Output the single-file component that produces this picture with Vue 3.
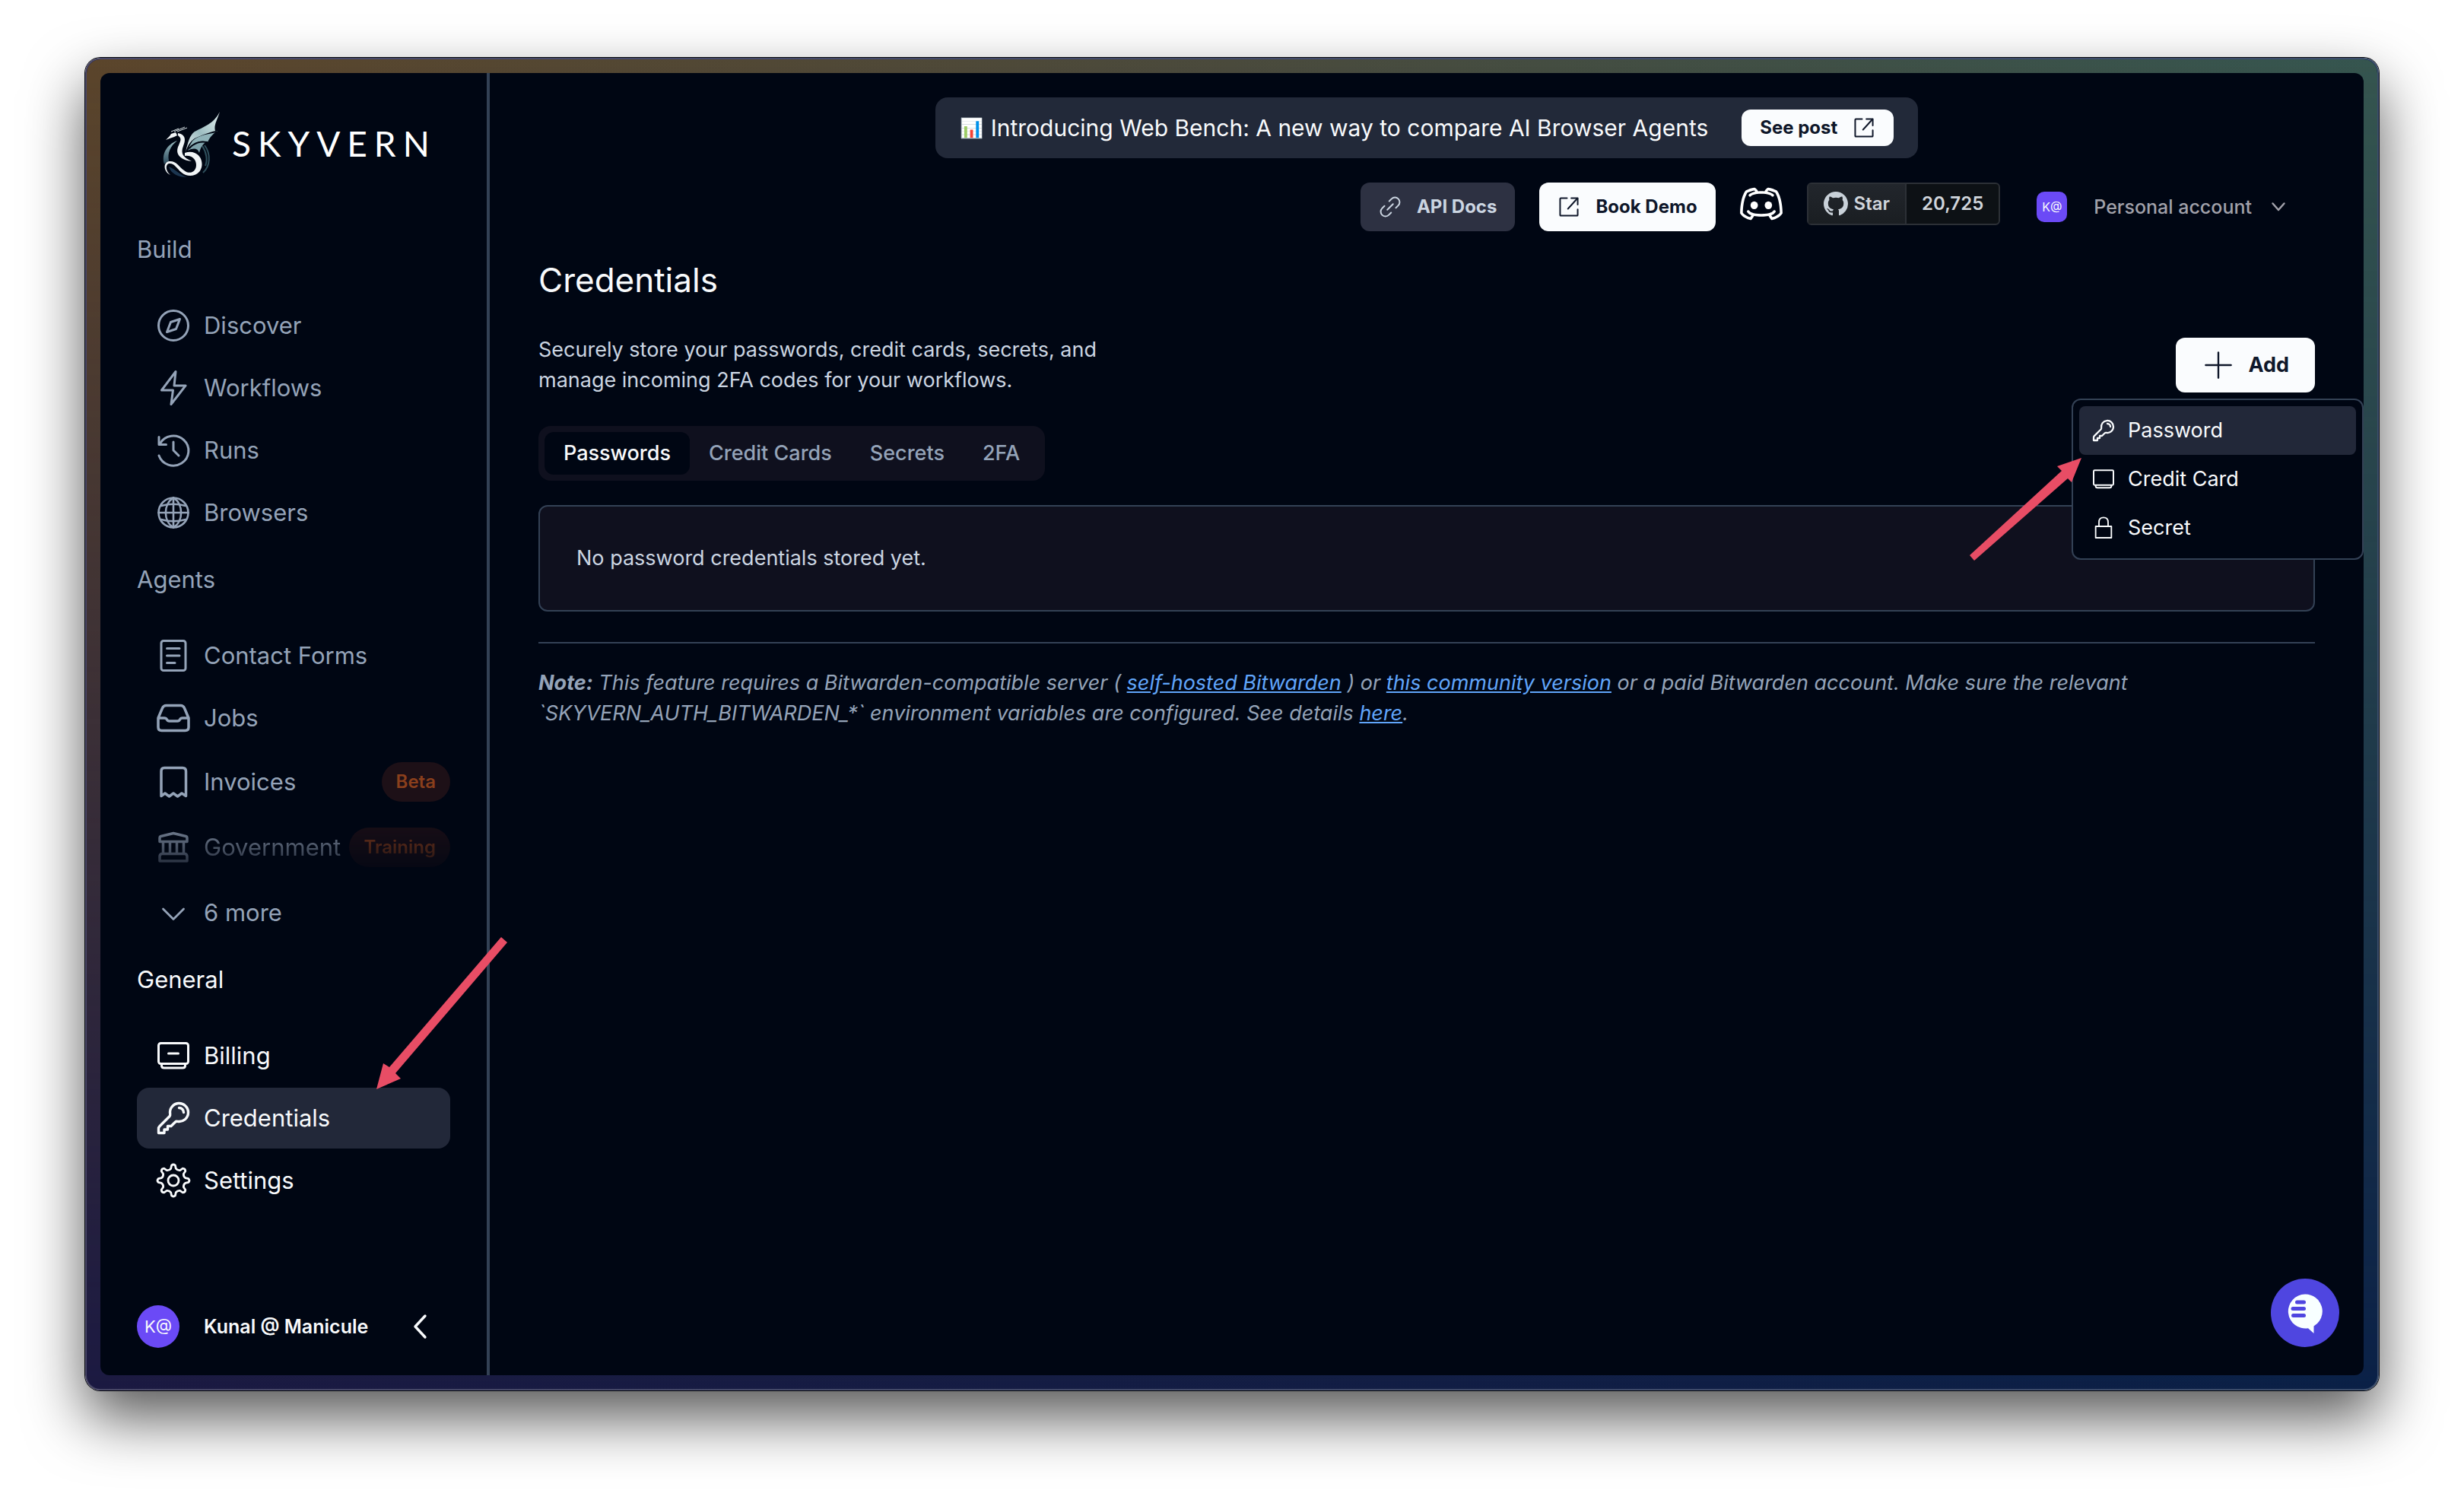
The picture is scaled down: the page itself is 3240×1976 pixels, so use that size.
<script setup>
const buildLinks = [
  { label: 'Discover', icon: 'compass' },
  { label: 'Workflows', icon: 'bolt' },
  { label: 'Runs', icon: 'history' },
  { label: 'Browsers', icon: 'globe' },
]
const agentLinks = [
  { label: 'Contact Forms', icon: 'form' },
  { label: 'Jobs', icon: 'inbox' },
  { label: 'Invoices', icon: 'receipt', badge: 'Beta' },
  { label: 'Government', icon: 'bank', badge: 'Training', faded: true },
]
const generalLinks = [
  { label: 'Billing', icon: 'card' },
  { label: 'Credentials', icon: 'key', active: true },
  { label: 'Settings', icon: 'gear' },
]
const tabs = ['Passwords', 'Credit Cards', 'Secrets', '2FA']
const menu = [
  { label: 'Password', icon: 'key' },
  { label: 'Credit Card', icon: 'cardPlain' },
  { label: 'Secret', icon: 'lock' },
]

// Eight-toothed outline centred in a 48 unit box.
function gearPath() {
  const at = (r, deg) => {
    const a = (deg * Math.PI) / 180
    return `${(24 + r * Math.sin(a)).toFixed(1)} ${(24 - r * Math.cos(a)).toFixed(1)}`
  }
  let d = ''
  for (let i = 0; i < 8; i++) {
    const a = i * 45
    d += `${i ? 'L' : 'M'}${at(16, a - 12)} L${at(20, a - 7)} Q${at(22, a)} ${at(20, a + 7)} L${at(16, a + 12)} Q${at(14, a + 22)} ${at(16, a + 33)} `
  }
  return d + 'Z'
}

const icons = {
  compass: { w: 3, d: ['M24 4.5a19.5 19.5 0 1 1 0 39 19.5 19.5 0 0 1 0-39Z', 'M32.5 15.5 20.5 19.5 15.5 32.5 27.5 28.5Z'] },
  bolt: { w: 3, d: ['M27 2.5 8.5 27H23.5L21 45.5 40 21H25Z'] },
  history: { w: 3, d: ['M5 31A20 19.5 0 1 0 6.5 15', 'M5 6.5V16.5H14.5', 'M24 13V24L31 31'] },
  globe: { w: 2.6, d: ['M24 4.5a19.5 19.5 0 1 1 0 39 19.5 19.5 0 0 1 0-39Z', 'M24 4.5V43.5', 'M4.5 24H43.5', 'M24 4.5C10.5 12 10.5 36 24 43.5', 'M24 4.5C37.5 12 37.5 36 24 43.5', 'M8 15Q24 10.5 40 15', 'M8 33Q24 37.5 40 33'] },
  form: { w: 3, d: ['M11 4.5H37a3 3 0 0 1 3 3V40.5a3 3 0 0 1-3 3H11a3 3 0 0 1-3-3V7.5a3 3 0 0 1 3-3Z', 'M15.5 14.5H32', 'M15.5 24H32', 'M15.5 33.5H26'] },
  inbox: { w: 3.5, d: ['M4 24 9.5 11Q11 7.5 14.5 7.5H33.5Q37 7.5 38.5 11L44 24V36Q44 40.5 39.5 40.5H8.5Q4 40.5 4 36V24H12Q14.5 24 15.5 26T18.5 28H29.5Q31.5 28 32.5 26T36 24H44'] },
  receipt: { w: 3.5, d: ['M8 42.5V10Q8 5.5 12 5.5H36Q40.5 5.5 40.5 10V42.5L35 39 29.5 43 24 39 18.5 43 13 39Z'] },
  bank: { w: 3.5, d: ['M6 16.5V11.5Q6 10 7.5 9.5L24 5.5 40.5 9.5Q42 10 42 11.5V16.5Z', 'M10.5 17V32', 'M19.5 17V32', 'M28.5 17V32', 'M37.5 17V32', 'M9 32.5H39Q42 33 42 36V42H6V36Q6 33 9 32.5Z'] },
  chevronDown: { w: 2.8, d: ['M10.5 19 24 32.5 37.5 19'] },
  card: { w: 3, d: ['M7.5 7.5H40.5a3 3 0 0 1 3 3V31.5a3 3 0 0 1-3 3H7.5a3 3 0 0 1-3-3V10.5a3 3 0 0 1 3-3Z', 'M8.5 35V37Q8.5 40 12 40H36Q39.5 40 39.5 37V35', 'M17.5 21H30.5'] },
  cardPlain: { w: 3, d: ['M6.5 6.5H41.5a2 2 0 0 1 2 2V33.5a2 2 0 0 1-2 2H6.5a2 2 0 0 1-2-2V8.5a2 2 0 0 1 2-2Z', 'M8.5 36V38Q8.5 41 12 41H36Q39.5 41 39.5 38V36'] },
  key: { w: 3.4, d: ['M31.5 10.5a6 6 0 0 1 6 6m6 0a12 12 0 0 1-14.06 11.82c-1.13-.19-2.32.05-3.13.86L21 34.5H16.5v4.5H12v4.5H4.5v-5.64c0-1.19.47-2.34 1.32-3.18l13-13c.81-.81 1.05-2 .86-3.13A12 12 0 1 1 43.5 16.5Z'] },
  lock: { w: 2.8, d: ['M8.5 21H39.5V43.5H8.5Z', 'M15 21V13Q15 3.5 24 3.5T33 13V21'] },
  gear: { w: 2.8, d: [gearPath(), 'M24 17a7 7 0 1 1 0 14 7 7 0 0 1 0-14Z'] },
  external: { w: 3.2, d: ['M20 5.5H7Q5.5 5.5 5.5 7V41Q5.5 42.5 7 42.5H41Q42.5 42.5 42.5 41V29', 'M29 5.5H42.5V19', 'M42 6 22 28'] },
  link: { w: 3.2, d: ['M22 12 27 7A9.5 9.5 0 0 1 41 21L36 26', 'M26 36 21 41A9.5 9.5 0 0 1 7 27L12 22', 'M18 30 30 18'] },
  plus: { w: 3, d: ['M24 3V45', 'M3 24H45'] },
  chevronLeft: { w: 3.4, d: ['M31 10 18 24 31 38'] },
}
</script>

<template>
  <div class="stage">
    <div class="window">
      <div class="app">
        <aside class="sidebar">
          <a class="logo" href="#" aria-label="Skyvern home">
            <svg class="dragon" viewBox="0 0 100 110" aria-hidden="true">
              <defs>
                <linearGradient id="wing" x1="1" y1="0" x2="0" y2="1">
                  <stop offset="0" stop-color="#e4f1f1" />
                  <stop offset=".55" stop-color="#9dbdc1" />
                  <stop offset="1" stop-color="#e8eff2" />
                </linearGradient>
                <linearGradient id="ring" x1="0" y1="0" x2="0" y2="1">
                  <stop offset="0" stop-color="#9cbec3" />
                  <stop offset="1" stop-color="#29475a" />
                </linearGradient>
              </defs>
              <path fill="url(#ring)" d="M28 50C14 55 7 68 11 81 14 77 17 78 17 76 15 66 19 57 28 50Z" />
              <path fill="none" stroke="#2f505d" stroke-width="2" d="M64 56C73 68 71 84 62 92M61 57C67 66 68 76 65 83" />
              <path fill="#1b3550" d="M17 84C20 94 30 98 41 98 31 95 27 88 17 84Z" />
              <path fill="#7fa2ab" d="M67 51C57 50 47 55 42 63 50 59 55 60 57 66 59 58 62 54 67 51Z" />
              <path fill="#8fb2b8" d="M81 37C69 39 56 42 50 47L43 59C51 52 59 49 68 52 71 45 75 41 81 37Z" />
              <path fill="none" stroke="#000613" stroke-width="2" d="M80 38C68 40 56 42 48 49M68 52C58 50 50 53 44 60" />
              <path fill="url(#wing)" d="M84 12C76 28 62 32 51 38 44 43 42 53 39 65 43 53 48 47 58 44 64 41 71 39 78 37 76 30 80 24 84 12Z" />
              <path fill="#f1f5f7" d="M13 49 18 44 20 41 26 39 28 43 24 45 18 47ZM29 40C40 42 39 50 36 57 32 67 36 72 47 77 30 75 25 66 30 56 33 49 34 47 29 43Z" />
              <path fill="none" stroke="#d6e0e4" stroke-width="1" d="M24 38 38 32M28 38 41 33M20 38 30 34" />
              <path fill="#f1f5f7" d="M38 66C53 61 63 73 60 85 57 97 42 99 34 92 27 86 24 79 17 80 12 82 13 90 19 95 10 91 9 79 17 77 27 76 30 84 37 89 44 95 53 91 53 82 53 74 47 69 38 70Z" />
            </svg>
            <span class="wordmark">SKYVERN</span>
          </a>

          <nav aria-label="Main">
            <section class="group muted">
              <h2>Build</h2>
              <a v-for="l in buildLinks" :key="l.label" class="item" href="#">
                <svg class="icon" viewBox="0 0 48 48" :stroke-width="icons[l.icon].w"><path v-for="d in icons[l.icon].d" :key="d" :d="d" /></svg>
                <span>{{ l.label }}</span>
              </a>
            </section>
            <section class="group muted">
              <h2>Agents</h2>
              <a v-for="l in agentLinks" :key="l.label" class="item" :class="{ faded: l.faded }" href="#">
                <svg class="icon" viewBox="0 0 48 48" :stroke-width="icons[l.icon].w"><path v-for="d in icons[l.icon].d" :key="d" :d="d" /></svg>
                <span>{{ l.label }}</span>
                <span v-if="l.badge" class="badge">{{ l.badge }}</span>
              </a>
              <button class="item more" type="button">
                <svg class="icon" viewBox="0 0 48 48" :stroke-width="icons.chevronDown.w"><path v-for="d in icons.chevronDown.d" :key="d" :d="d" /></svg>
                <span>6 more</span>
              </button>
            </section>
            <section class="group">
              <h2>General</h2>
              <a v-for="l in generalLinks" :key="l.label" class="item" :class="{ active: l.active }" href="#">
                <svg class="icon" viewBox="0 0 48 48" :stroke-width="icons[l.icon].w"><path v-for="d in icons[l.icon].d" :key="d" :d="d" /></svg>
                <span>{{ l.label }}</span>
                <svg v-if="l.active" class="arrow arrow-nav" viewBox="0 0 172 206" aria-hidden="true">
                  <path d="M0 204 9 170 17 175 164 4 172 11 25 183 32 190Z" />
                </svg>
              </a>
            </section>
          </nav>

          <footer class="user">
            <span class="avatar">K@</span>
            <span class="user-name">Kunal @ Manicule</span>
            <button class="collapse" type="button" aria-label="Collapse sidebar">
              <svg class="icon" viewBox="0 0 48 48" :stroke-width="icons.chevronLeft.w"><path v-for="d in icons.chevronLeft.d" :key="d" :d="d" /></svg>
            </button>
          </footer>
        </aside>

        <main class="main">
          <div class="banner">
            <span class="emoji">📊</span>
            <span class="banner-text">Introducing Web Bench: A new way to compare AI Browser Agents</span>
            <a class="btn light small" href="#">
              <span>See post</span>
              <svg class="icon" viewBox="0 0 48 48" :stroke-width="icons.external.w"><path v-for="d in icons.external.d" :key="d" :d="d" /></svg>
            </a>
          </div>

          <header class="topbar">
            <a class="btn slate" href="#">
              <svg class="icon" viewBox="0 0 48 48" :stroke-width="icons.link.w"><path v-for="d in icons.link.d" :key="d" :d="d" /></svg>
              <span>API Docs</span>
            </a>
            <a class="btn light" href="#">
              <svg class="icon" viewBox="0 0 48 48" :stroke-width="icons.external.w"><path v-for="d in icons.external.d" :key="d" :d="d" /></svg>
              <span>Book Demo</span>
            </a>
            <div class="social">
              <a class="discord" href="#" aria-label="Discord">
                <svg viewBox="0 0 15 15" fill="#fff">
                  <path fill-rule="evenodd" d="M5.07451 1.82584C5.03267 1.81926 4.99014 1.81825 4.94803 1.82284C4.10683 1.91446 2.82673 2.36828 2.07115 2.77808C2.02106 2.80525 1.97621 2.84112 1.93869 2.88402C1.62502 3.24266 1.34046 3.82836 1.11706 4.38186C0.887447 4.95076 0.697293 5.55032 0.588937 5.98354C0.236232 7.39369 0.042502 9.08728 0.0174948 10.6925C0.0162429 10.7729 0.0351883 10.8523 0.0725931 10.9234C0.373679 11.496 1.02015 12.027 1.66809 12.4152C2.32332 12.8078 3.08732 13.1182 3.70385 13.1778C3.85335 13.1922 4.00098 13.1358 4.10282 13.0255C4.2572 12.8581 4.5193 12.4676 4.71745 12.1643C4.80739 12.0267 4.89157 11.8953 4.95845 11.7901C5.62023 11.9106 6.45043 11.9801 7.50002 11.9801C8.54844 11.9801 9.37796 11.9107 10.0394 11.7905C10.1062 11.8957 10.1903 12.0269 10.2801 12.1643C10.4783 12.4676 10.7404 12.8581 10.8947 13.0255C10.9966 13.1358 11.1442 13.1922 11.2937 13.1778C11.9102 13.1182 12.6742 12.8078 13.3295 12.4152C13.9774 12.027 14.6239 11.496 14.925 10.9234C14.9624 10.8523 14.9813 10.7729 14.9801 10.6925C14.9551 9.08728 14.7613 7.39369 14.4086 5.98354C14.3003 5.55032 14.1101 4.95076 13.8805 4.38186C13.6571 3.82836 13.3725 3.24266 13.0589 2.88402C13.0214 2.84112 12.9765 2.80525 12.9264 2.77808C12.1708 2.36828 10.8907 1.91446 10.0495 1.82284C10.0074 1.81825 9.96489 1.81926 9.92305 1.82584C9.71676 1.85825 9.5391 1.96458 9.40809 2.06355C9.26977 2.16804 9.1413 2.29668 9.0304 2.42682C8.86968 2.61544 8.71437 2.84488 8.61428 3.06225C8.27237 3.03501 7.90138 3.02 7.5 3.02C7.0977 3.02 6.72593 3.03508 6.38337 3.06244C6.28328 2.84501 6.12792 2.61549 5.96716 2.42682C5.85626 2.29668 5.72778 2.16804 5.58947 2.06355C5.45846 1.96458 5.2808 1.85825 5.07451 1.82584ZM11.0181 11.5382C11.0395 11.5713 11.0615 11.6051 11.0838 11.6392C11.2169 11.843 11.3487 12.0385 11.4508 12.1809C11.8475 12.0916 12.352 11.8818 12.8361 11.5917C13.3795 11.2661 13.8098 10.8918 14.0177 10.5739C13.9852 9.06758 13.7993 7.50369 13.4773 6.21648C13.38 5.82759 13.2038 5.27021 12.9903 4.74117C12.7893 4.24326 12.5753 3.82162 12.388 3.5792C11.7376 3.24219 10.7129 2.88582 10.0454 2.78987C10.0308 2.79839 10.0113 2.81102 9.98675 2.82955C9.91863 2.881 9.84018 2.95666 9.76111 3.04945C9.71959 3.09817 9.68166 3.1471 9.64768 3.19449C9.953 3.25031 10.2253 3.3171 10.4662 3.39123C11.1499 3.6016 11.6428 3.89039 11.884 4.212C12.0431 4.42408 12.0001 4.72494 11.788 4.884C11.5759 5.04306 11.2751 5.00008 11.116 4.788C11.0572 4.70961 10.8001 4.4984 10.1838 4.30877C9.58933 4.12585 8.71356 3.98 7.5 3.98C6.28644 3.98 5.41067 4.12585 4.81616 4.30877C4.19988 4.4984 3.94279 4.70961 3.884 4.788C3.72494 5.00008 3.42408 5.04306 3.212 4.884C2.99992 4.72494 2.95694 4.42408 3.116 4.212C3.35721 3.89039 3.85011 3.6016 4.53383 3.39123C4.77418 3.31727 5.04571 3.25062 5.35016 3.19488C5.31611 3.14738 5.27808 3.09831 5.23645 3.04945C5.15738 2.95666 5.07893 2.881 5.01081 2.82955C4.98628 2.81102 4.96674 2.79839 4.95217 2.78987C4.28464 2.88582 3.25999 3.24219 2.60954 3.5792C2.42226 3.82162 2.20825 4.24326 2.00729 4.74117C1.79376 5.27021 1.61752 5.82759 1.52025 6.21648C1.19829 7.50369 1.01236 9.06758 0.97986 10.5739C1.18772 10.8918 1.61807 11.2661 2.16148 11.5917C2.64557 11.8818 3.15003 12.0916 3.5468 12.1809C3.64885 12.0385 3.78065 11.843 3.9138 11.6392C3.93626 11.6048 3.95838 11.5708 3.97996 11.5375C3.19521 11.2591 2.77361 10.8758 2.50064 10.4664C2.35359 10.2458 2.4132 9.94778 2.63377 9.80074C2.85435 9.65369 3.15236 9.71329 3.29941 9.93387C3.56077 10.3259 4.24355 11.0201 7.50002 11.0201C10.7565 11.0201 11.4392 10.326 11.7006 9.93386C11.8477 9.71329 12.1457 9.65369 12.3663 9.80074C12.5869 9.94779 12.6465 10.2458 12.4994 10.4664C12.2262 10.8762 11.8041 11.2598 11.0181 11.5382Z" />
                  <ellipse cx="5" cy="8" rx="1.3" ry="1.4" />
                  <ellipse cx="10" cy="8" rx="1.3" ry="1.4" />
                </svg>
              </a>
              <div class="github">
                <a class="gh-star" href="#">
                  <svg viewBox="0 0 16 16" fill="#c9d1d9" aria-hidden="true"><path d="M8 0C3.58 0 0 3.58 0 8c0 3.54 2.29 6.53 5.47 7.59.4.07.55-.17.55-.38 0-.19-.01-.82-.01-1.49-2.01.37-2.53-.49-2.69-.94-.09-.23-.48-.94-.82-1.13-.28-.15-.68-.52-.01-.53.63-.01 1.08.58 1.23.82.72 1.21 1.87.87 2.33.66.07-.52.28-.87.51-1.07-1.78-.2-3.64-.89-3.64-3.95 0-.87.31-1.59.82-2.15-.08-.2-.36-1.02.08-2.12 0 0 .67-.21 2.2.82.64-.18 1.32-.27 2-.27s1.36.09 2 .27c1.53-1.04 2.2-.82 2.2-.82.44 1.1.16 1.92.08 2.12.51.56.82 1.27.82 2.15 0 3.07-1.87 3.75-3.65 3.95.29.25.54.73.54 1.48 0 1.07-.01 1.93-.01 2.2 0 .21.15.46.55.38A8.01 8.01 0 0 0 16 8c0-4.42-3.58-8-8-8Z" /></svg>
                  <span>Star</span>
                </a>
                <a class="gh-count" href="#">20,725</a>
              </div>
            </div>
            <button class="account" type="button">
              <span class="account-badge">K@</span>
              <span>Personal account</span>
              <svg class="icon" viewBox="0 0 48 48" stroke-width="5"><path d="M9 15 24 32 39 15" /></svg>
            </button>
          </header>

          <h1>Credentials</h1>

          <div class="intro">
            <p>Securely store your passwords, credit cards, secrets, and<br />manage incoming 2FA codes for your workflows.</p>
            <div class="add-wrap">
              <button class="add" type="button" aria-haspopup="menu" aria-expanded="true">
                <svg class="icon" viewBox="0 0 48 48" :stroke-width="icons.plus.w"><path v-for="d in icons.plus.d" :key="d" :d="d" /></svg>
                <span>Add</span>
              </button>
              <div class="menu" role="menu">
                <button v-for="(m, i) in menu" :key="m.label" class="menu-item" :class="{ current: i === 0 }" type="button" role="menuitem">
                  <svg class="icon" viewBox="0 0 48 48" :stroke-width="icons[m.icon].w"><path v-for="d in icons[m.icon].d" :key="d" :d="d" /></svg>
                  <span>{{ m.label }}</span>
                </button>
                <svg class="arrow arrow-menu" viewBox="0 0 148 136" aria-hidden="true">
                  <path d="M147 1 115 12 121 18 0 129 6 136 129 28 134 33Z" />
                </svg>
              </div>
            </div>
          </div>

          <div class="tabs" role="tablist">
            <button v-for="(t, i) in tabs" :key="t" class="tab" :class="{ on: i === 0 }" type="button" role="tab" :aria-selected="i === 0">{{ t }}</button>
          </div>

          <div class="empty">No password credentials stored yet.</div>

          <p class="note"><strong>Note:</strong><span> This feature requires a Bitwarden-compatible server ( </span><a href="#">self-hosted Bitwarden</a><span> ) or </span><a href="#">this community version</a><span> or a paid Bitwarden account. Make sure the relevant </span><span>`SKYVERN_AUTH_BITWARDEN_*` environment variables are configured. See details </span><a href="#">here</a><span>.</span></p>

          <button class="chat" type="button" aria-label="Open chat">
            <svg viewBox="0 0 90 90" aria-hidden="true">
              <path fill="#f8ffff" d="M45 20.5a22.5 22.5 0 0 1 11.5 42V72L49 65.2A22.5 22.5 0 1 1 45 20.5Z" />
              <path stroke="#4f46e0" stroke-width="5" stroke-linecap="round" d="M34.5 31H43.5M29 39.5H43.5M29.5 48.5H43.5" />
            </svg>
          </button>
        </main>
      </div>
    </div>
  </div>
</template>

<style>
body {
  margin: 0;
  background: #fff;
}
</style>

<style scoped>
.stage {
  box-sizing: border-box;
  min-height: 100vh;
  padding: 76px 112px 148px;
  display: flex;
  font-family: Inter, "Liberation Sans", sans-serif;
  font-size: 27px;
  line-height: 40px;
  color: #f8fafc;
  overflow: hidden;
}
.stage *,
.stage *::before {
  box-sizing: border-box;
}
h1, h2, p {
  margin: 0;
  font-weight: 400;
}
a {
  color: inherit;
  text-decoration: none;
}
button {
  font: inherit;
  color: inherit;
  background: none;
  border: 0;
  padding: 0;
  margin: 0;
}
.icon {
  flex: none;
  display: block;
  fill: none;
  stroke: currentColor;
  stroke-linecap: round;
  stroke-linejoin: round;
}

.window {
  position: relative;
  flex: 1;
  display: flex;
  padding: 18px;
  border: 2px solid rgba(255, 255, 255, .2);
  border-radius: 20px;
  background: linear-gradient(to right, #1c1a42, #0b2147) border-box;
  box-shadow: 0 0 0 1px #05070c, 0 36px 78px rgba(0, 0, 0, .66);
}
.window::before {
  content: "";
  position: absolute;
  inset: 0;
  border-radius: 18px;
  background: linear-gradient(to right, #5b452b, #4a4a3c 50%, #35554f);
  -webkit-mask-image: linear-gradient(to bottom, #000, transparent);
  mask-image: linear-gradient(to bottom, #000, transparent);
}
.app {
  position: relative;
  flex: 1;
  display: flex;
  border-radius: 12px;
  background: #000613;
}

.sidebar {
  flex: none;
  width: 512px;
  padding: 0 48px 36px;
  border-right: 4px solid #334155;
  display: flex;
  flex-direction: column;
}
.logo {
  display: flex;
  align-items: flex-start;
  height: 184px;
  padding: 39px 0 0 25px;
}
.dragon {
  flex: none;
  width: 100px;
  height: 110px;
}
.wordmark {
  padding-top: 26px;
  font-family: Lato, sans-serif;
  font-size: 46px;
  line-height: 56px;
  letter-spacing: 9px;
  color: #fff;
}
.group {
  display: flex;
  flex-direction: column;
  gap: 2px;
  padding-top: 20px;
  font-size: 31px;
  line-height: 48px;
}
.muted {
  color: #94a3b8;
}
.group h2 {
  margin-bottom: 30px;
  font-size: 31px;
  line-height: 56px;
}
.item {
  position: relative;
  display: flex;
  align-items: center;
  width: 412px;
  padding: 16px 0 16px 24px;
  border-radius: 16px;
  text-align: left;
}
.item > .icon {
  width: 48px;
  height: 48px;
  margin-right: 16px;
}
.more {
  margin-top: 2px;
}
.active {
  background: #222839;
}
.faded {
  -webkit-mask-image: linear-gradient(to bottom, rgba(0, 0, 0, .95), rgba(0, 0, 0, .05));
  mask-image: linear-gradient(to bottom, rgba(0, 0, 0, .95), rgba(0, 0, 0, .05));
}
.badge {
  margin-left: auto;
  padding: 6px 19px;
  border-radius: 26px;
  background: #1d1017;
  color: #8a3f1c;
  font-size: 24px;
  font-weight: 600;
  line-height: 40px;
}
.user {
  margin-top: auto;
  display: flex;
  align-items: center;
  height: 56px;
}
.avatar {
  width: 56px;
  height: 56px;
  border-radius: 50%;
  background: #6b4af6;
  font-size: 22px;
  line-height: 56px;
  text-align: center;
}
.user-name {
  flex: 1;
  margin-left: 32px;
  font-size: 25px;
  font-weight: 600;
}
.collapse {
  margin-right: 16px;
}
.collapse .icon {
  width: 48px;
  height: 48px;
}

.main {
  flex: 1;
  min-width: 0;
  padding: 32px 64px 0;
  display: flex;
  flex-direction: column;
  align-items: stretch;
}
.banner {
  align-self: center;
  display: flex;
  align-items: center;
  height: 80px;
  padding: 0 32px;
  border-radius: 16px;
  background: #222939;
}
.emoji {
  font-size: 25px;
  margin-right: 10px;
}
.banner-text {
  font-size: 30px;
  margin-right: 44px;
}
.btn {
  display: flex;
  align-items: center;
  gap: 20px;
  height: 64px;
  padding: 0 24px;
  border-radius: 12px;
  font-size: 24px;
  font-weight: 700;
}
.btn .icon {
  width: 30px;
  height: 30px;
}
.light {
  background: #fafcfe;
  color: #0f172a;
}
.small {
  height: 48px;
}
.slate {
  background: #2d3142;
  color: #cbd5e1;
}
.topbar {
  display: flex;
  align-items: center;
  justify-content: flex-end;
  gap: 32px;
  margin-top: 32px;
  padding-right: 36px;
}
.social {
  align-self: flex-start;
  display: flex;
  gap: 32px;
}
.discord,
.discord svg {
  display: block;
  width: 56px;
  height: 56px;
}
.github {
  display: flex;
  height: 56px;
  margin-right: 16px;
  border: 2px solid #2c3036;
  border-radius: 6px;
  background: #0d1115;
  color: #d0d5db;
  font-size: 24px;
  font-weight: 600;
}
.gh-star {
  display: flex;
  align-items: center;
  gap: 8px;
  padding: 0 20px;
  background: linear-gradient(#22262c, #1a1e22);
  border-right: 2px solid #2c3036;
}
.gh-star svg {
  width: 32px;
  height: 32px;
}
.gh-count {
  padding: 0 20px;
  line-height: 52px;
}
.account {
  display: flex;
  align-items: center;
  color: #a1a1aa;
  font-size: 25px;
  font-weight: 500;
}
.account-badge {
  width: 40px;
  height: 40px;
  margin-right: 35px;
  border-radius: 10px;
  background: #6b4af6;
  color: #f8fafc;
  font-size: 16px;
  font-weight: 400;
}
.account .icon {
  width: 24px;
  height: 24px;
  margin-left: 23px;
}

h1 {
  margin-top: 32px;
  font-size: 44px;
  font-weight: 400;
  line-height: 64px;
}
.intro {
  display: flex;
  align-items: center;
  justify-content: space-between;
  margin-top: 40px;
  color: #cbd5e1;
}
.add-wrap {
  position: relative;
}
.add {
  display: flex;
  align-items: center;
  gap: 20px;
  height: 72px;
  padding: 0 34px 0 37px;
  border-radius: 12px;
  background: #fafcfe;
  color: #0f172a;
  font-weight: 700;
}
.add .icon {
  width: 38px;
  height: 38px;
}
.menu {
  position: absolute;
  z-index: 2;
  top: 80px;
  right: -64px;
  width: 384px;
  padding: 8px;
  border: 2px solid #334155;
  border-radius: 12px;
  background: #000613;
  color: #f8fafc;
}
.menu-item {
  display: flex;
  align-items: center;
  gap: 16px;
  width: 100%;
  height: 64px;
  padding: 0 16px;
  border-radius: 8px;
}
.menu-item .icon {
  width: 32px;
  height: 32px;
}
.current {
  background: #222839;
}
.tabs {
  align-self: flex-start;
  display: flex;
  margin-top: 40px;
  padding: 8px;
  border-radius: 16px;
  background: #0f101e;
  color: #94a3b8;
}
.tab {
  height: 56px;
  padding: 0 25px;
  border-radius: 12px;
  font-weight: 500;
}
.on {
  background: #000613;
  color: #f8fafc;
}
.empty {
  margin-top: 32px;
  padding: 48px;
  border: 2px solid #334155;
  border-radius: 12px;
  background: #0f101e;
  color: #cbd5e1;
}
.note {
  margin-top: 40px;
  padding-top: 32px;
  border-top: 2px solid #334155;
  color: #94a3b8;
  font-style: italic;
}
.note strong {
  font-weight: 700;
}
.note a {
  color: #60a5fa;
  text-decoration: underline;
}
.chat {
  position: absolute;
  right: 32px;
  bottom: 37px;
  width: 90px;
  height: 90px;
  border-radius: 50%;
  background: #4f46e0;
}
.chat svg {
  display: block;
  fill: none;
}
.arrow {
  position: absolute;
  z-index: 3;
  fill: #e84d65;
}
.arrow-nav {
  left: 315px;
  bottom: 76px;
  width: 172px;
  height: 206px;
}
.arrow-menu {
  left: -136px;
  top: 75px;
  width: 148px;
  height: 136px;
}
</style>
